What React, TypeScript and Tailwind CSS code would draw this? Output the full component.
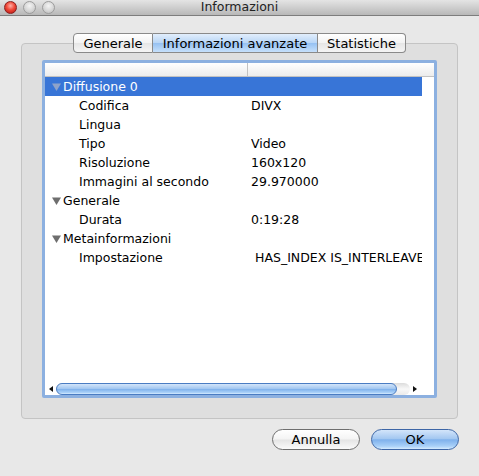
import React from "react";

type Row = { label: string; value?: string; group?: boolean; selected?: boolean; shift?: boolean };

const rows: Row[] = [
  { label: "Diffusione 0", group: true, selected: true },
  { label: "Codifica", value: "DIVX" },
  { label: "Lingua" },
  { label: "Tipo", value: "Video" },
  { label: "Risoluzione", value: "160x120" },
  { label: "Immagini al secondo", value: "29.970000" },
  { label: "Generale", group: true },
  { label: "Durata", value: "0:19:28" },
  { label: "Metainformazioni", group: true },
  { label: "Impostazione", value: "HAS_INDEX IS_INTERLEAVED", shift: true },
];

const aqua =
  "bg-[linear-gradient(to_bottom,#d3e5fa_0%,#a4c8f1_45%,#7fb1ec_52%,#a9d0f8_85%,#d6ebff_100%)]";

function Light({ red }: { red?: boolean }) {
  return (
    <div
      className={
        red
          ? "h-[13px] w-[13px] rounded-full border border-[#8a1f1f] bg-[radial-gradient(circle_at_50%_35%,#ffb0a8_0%,#f04a3a_45%,#b3100c_100%)]"
          : "h-[13px] w-[13px] rounded-full border border-[#9c9c9c] bg-[radial-gradient(circle_at_50%_35%,#f4f4f4_0%,#d6d6d6_55%,#b8b8b8_100%)]"
      }
    />
  );
}

function Triangle({ selected }: { selected?: boolean }) {
  return (
    <svg width="9" height="8" viewBox="0 0 9 8" className="mr-[2px] shrink-0">
      <path d="M0 0.5 L9 0.5 L4.5 8 Z" fill={selected ? "#8fa3c9" : "#6e6e6e"} />
    </svg>
  );
}

function Tab({ label, active, first, last }: { label: string; active?: boolean; first?: boolean; last?: boolean }) {
  return (
    <div
      className={[
        "flex h-[20px] items-center justify-center border-y border-[#8a8a8a] text-[13px] leading-none text-black",
        active
          ? "bg-[linear-gradient(to_bottom,#e2eefc_0%,#b9d6f6_48%,#96c1f2_52%,#c6e0fb_100%)] border-[#6f8fbd]"
          : "bg-[linear-gradient(to_bottom,#ffffff_0%,#f3f3f3_48%,#e6e6e6_52%,#f5f5f5_100%)]",
        first ? "rounded-l-[4px] border-l" : "",
        last ? "rounded-r-[4px] border-r" : "border-r",
      ].join(" ")}
      style={{ width: first ? 80 : last ? 88 : 165 }}
    >
      {label}
    </div>
  );
}

export default function App() {
  return (
    <div
      className="flex h-[476px] w-[479px] flex-col bg-[#e8e8e8] text-black"
      style={{ fontFamily: '"Lucida Grande", "DejaVu Sans", sans-serif' }}
    >
      {/* title bar */}
      <div className="relative flex h-[16px] shrink-0 items-center border-b border-[#7d7d7d] bg-[linear-gradient(to_bottom,#e4e4e4,#b8b8b8)] pl-[4px]">
        <div className="flex gap-[6px]">
          <Light red />
          <Light />
          <Light />
        </div>
        <div className="absolute inset-0 flex items-center justify-center text-[12.5px] leading-none text-[#222]">
          Informazioni
        </div>
      </div>

      {/* tabs + group box */}
      <div className="mt-[17px] flex flex-col px-[21px]">
        <div className="relative z-10 flex justify-center">
          <Tab label="Generale" first />
          <Tab label="Informazioni avanzate" active />
          <Tab label="Statistiche" last />
        </div>
        <div className="-mt-[10px] h-[376px] rounded-[4px] border border-[#c4c4c4] bg-[#dfdfdf] px-[20px] pb-[20px] pt-[16px]">
          <div className="flex h-full flex-col rounded-[2px] border-[3px] border-[#8cb0e0] bg-white">
            {/* header */}
            <div className="flex h-[14px] shrink-0 border-b border-[#c2c2c2] bg-[linear-gradient(to_bottom,#ffffff,#ececec)]">
              <div className="w-[203px] border-r border-[#c2c2c2]" />
              <div className="flex-1" />
            </div>
            {/* body */}
            <div className="flex min-h-0 flex-1">
              <div className="flex min-w-0 flex-1 flex-col">
                {rows.map((r) => (
                  <div
                    key={r.label}
                    className={
                      "flex h-[19px] items-center text-[12.5px] leading-[19px] " +
                      (r.selected ? "bg-[#3875d7] text-white" : "")
                    }
                  >
                    <div className={"flex w-[206px] shrink-0 items-center " + (r.group ? "pl-[7px]" : "pl-[34px]")}>
                      {r.group && <Triangle selected={r.selected} />}
                      <span>{r.label}</span>
                    </div>
                    <div className={"min-w-0 flex-1 overflow-hidden whitespace-nowrap " + (r.shift ? "pl-[4px]" : "")}>
                      {r.value}
                    </div>
                  </div>
                ))}
              </div>
              <div className="w-[12px] shrink-0 bg-white" />
            </div>
            {/* horizontal scroller */}
            <div className="flex h-[13px] shrink-0 items-center bg-white">
              <div className="flex w-[11px] items-center justify-center">
                <svg width="4" height="6" viewBox="0 0 4 6">
                  <path d="M4 0 L0 3 L4 6 Z" fill="#111" />
                </svg>
              </div>
              <div className="flex h-[12px] flex-1 items-center rounded-full bg-[linear-gradient(to_bottom,#dcdcdc,#f8f8f8_50%,#eaeaea)]">
                <div className={"h-[12px] w-[341px] rounded-full border border-[#4a7cc2] " + aqua} />
              </div>
              <div className="flex w-[10px] items-center justify-center">
                <svg width="4" height="6" viewBox="0 0 4 6">
                  <path d="M0 0 L4 3 L0 6 Z" fill="#111" />
                </svg>
              </div>
              <div className="w-[14px]" />
            </div>
          </div>
        </div>
      </div>

      {/* buttons */}
      <div className="mt-[10px] flex justify-end gap-[11px] pr-[20px]">
        <button className="flex h-[21px] w-[88px] items-center justify-center rounded-full border border-[#6e6e6e] bg-[linear-gradient(to_bottom,#ffffff_0%,#f4f4f4_48%,#e4e4e4_52%,#fafafa_100%)] text-[13px] leading-none">
          Annulla
        </button>
        <button className={"flex h-[21px] w-[88px] items-center justify-center rounded-full border border-[#3d66a6] text-[13px] leading-none " + aqua}>
          OK
        </button>
      </div>
    </div>
  );
}
